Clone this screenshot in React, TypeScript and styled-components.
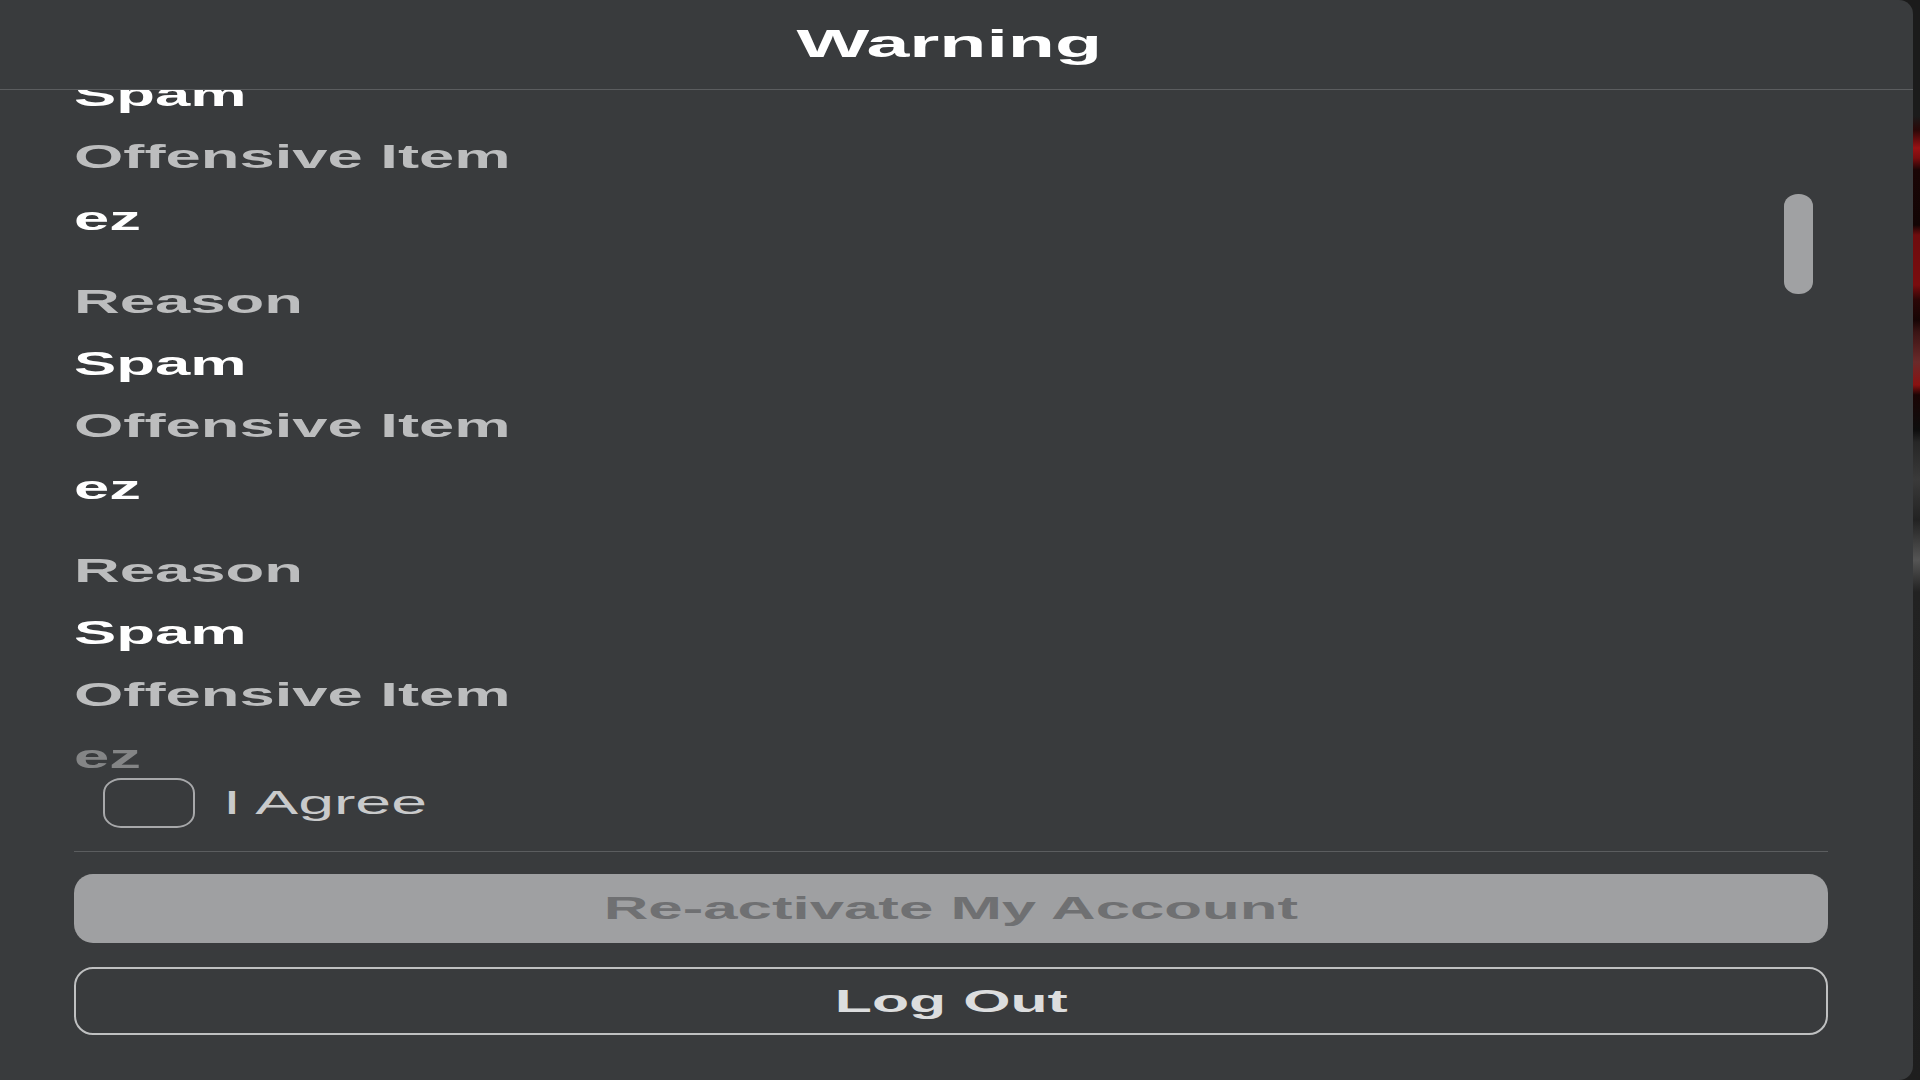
import React, { useLayoutEffect, useRef } from "react";
import styled, { createGlobalStyle } from "styled-components";

const GlobalStyle = createGlobalStyle`
  html, body {
    margin: 0;
    padding: 0;
    height: 100%;
    overflow: hidden;
  }
  body {
    font-family: "Liberation Sans", Arial, sans-serif;
    background: linear-gradient(
      to bottom,
      #1b1b1b 0px,
      #1b1b1b 116px,
      #2a0707 130px,
      #9a1114 148px,
      #7a0d0f 158px,
      #1a0505 170px,
      #120404 225px,
      #6e0c0e 235px,
      #7a0c0e 285px,
      #2b0606 300px,
      #160404 320px,
      #3a1414 332px,
      #6a2a2a 362px,
      #8a1111 385px,
      #1a0404 395px,
      #0d0d0d 430px,
      #262626 442px,
      #3a3a3a 480px,
      #222222 520px,
      #555555 560px,
      #222222 592px,
      #1e1e1e 1080px
    );
  }
  #root {
    height: 100%;
  }
`;

const Screen = styled.main`
  height: 1080px;
  display: flex;
`;

const Panel = styled.section`
  width: 1913px;
  height: 100%;
  flex: none;
  background: #393b3d;
  border-radius: 0 14px 14px 0;
  display: flex;
  flex-direction: column;
  overflow: hidden;
`;

const Header = styled.header`
  height: 89px;
  flex: none;
  border-bottom: 1px solid #5b5d5f;
  display: flex;
  align-items: center;
  justify-content: center;
  padding-right: 14px;
`;

const Title = styled.h1`
  margin: 0;
  display: inline-block;
  font-size: 38px;
  line-height: 89px;
  font-weight: 700;
  color: #ffffff;
  transform: scaleX(2.03);
  transform-origin: center;
`;

const ScrollFrame = styled.div`
  position: relative;
  flex: 1;
  min-height: 0;
`;

const ScrollArea = styled.div`
  height: 100%;
  overflow-y: auto;
  padding-left: 74px;
  box-sizing: border-box;
  scrollbar-width: none;
  -webkit-mask-image: linear-gradient(
    to bottom,
    #000 calc(100% - 36px),
    rgba(0, 0, 0, 0.38) calc(100% - 26px)
  );
  mask-image: linear-gradient(
    to bottom,
    #000 calc(100% - 36px),
    rgba(0, 0, 0, 0.38) calc(100% - 26px)
  );
  &::-webkit-scrollbar {
    display: none;
  }
`;

const ScrollThumb = styled.div`
  position: absolute;
  top: 104px;
  right: 100px;
  width: 29px;
  height: 100px;
  border-radius: 14px / 12px;
  background: #a0a1a3;
`;

const Group = styled.div`
  margin-bottom: 21px;
`;

const Row = styled.div<{ $tone: "label" | "value" }>`
  height: 62px;
  line-height: 62px;
  font-size: 33px;
  font-weight: 700;
  color: ${(p) => (p.$tone === "label" ? "#bcbdbe" : "#ffffff")};
  white-space: nowrap;
`;

const Wide = styled.span<{ $scale: number; $origin?: string }>`
  display: inline-block;
  transform: scaleX(${(p) => p.$scale});
  transform-origin: ${(p) => p.$origin ?? "left center"};
`;

const Footer = styled.footer`
  flex: none;
  display: flex;
  flex-direction: column;
  padding: 6px 85px 45px 74px;
`;

const AgreeRow = styled.label`
  display: flex;
  align-items: center;
  gap: 28px;
  height: 50px;
  padding-left: 29px;
`;

const CheckBox = styled.span`
  width: 92px;
  height: 50px;
  flex: none;
  box-sizing: border-box;
  border: 2px solid #a7a8aa;
  border-radius: 18px / 15px;
`;

const AgreeText = styled.span`
  font-size: 33px;
  font-weight: 400;
  color: #c9cacb;
  white-space: nowrap;
`;

const Divider = styled.hr`
  margin: 23px 0 0;
  height: 1px;
  border: none;
  background: #5b5d5f;
`;

const Buttons = styled.div`
  margin-top: 22px;
  display: flex;
  flex-direction: column;
  gap: 24px;
`;

const BaseButton = styled.button`
  display: flex;
  align-items: center;
  justify-content: center;
  width: 100%;
  box-sizing: border-box;
  border-radius: 19px;
  font-family: "Liberation Sans", Arial, sans-serif;
  font-size: 32px;
  font-weight: 700;
  padding: 0;
  cursor: pointer;
`;

const PrimaryButton = styled(BaseButton)`
  height: 69px;
  border: none;
  background: #9fa0a2;
  color: #6f7072;
`;

const OutlineButton = styled(BaseButton)`
  height: 68px;
  border: 2px solid #bfc0c1;
  background: transparent;
  color: #dcddde;
`;

const ROW_SCALE = 1.92;

const warnings = Array.from({ length: 3 }, (_, i) => ({
  id: i,
  reason: "Spam",
  item: "ez",
}));

export default function App() {
  const scrollRef = useRef<HTMLDivElement>(null);

  useLayoutEffect(() => {
    if (scrollRef.current) scrollRef.current.scrollTop = 88;
  }, []);

  return (
    <>
      <GlobalStyle />
      <Screen>
        <Panel>
          <Header>
            <Title>Warning</Title>
          </Header>
          <ScrollFrame>
            <ScrollArea ref={scrollRef}>
              {warnings.map((w) => (
                <Group key={w.id}>
                  <Row $tone="label">
                    <Wide $scale={ROW_SCALE}>Reason</Wide>
                  </Row>
                  <Row $tone="value">
                    <Wide $scale={ROW_SCALE}>{w.reason}</Wide>
                  </Row>
                  <Row $tone="label">
                    <Wide $scale={ROW_SCALE}>Offensive Item</Wide>
                  </Row>
                  <Row $tone="value">
                    <Wide $scale={ROW_SCALE}>{w.item}</Wide>
                  </Row>
                </Group>
              ))}
            </ScrollArea>
            <ScrollThumb />
          </ScrollFrame>
          <Footer>
            <AgreeRow>
              <CheckBox role="checkbox" aria-checked="false" />
              <AgreeText>
                <Wide $scale={1.95}>I Agree</Wide>
              </AgreeText>
            </AgreeRow>
            <Divider />
            <Buttons>
              <PrimaryButton disabled>
                <Wide $scale={1.93} $origin="center">
                  Re-activate My Account
                </Wide>
              </PrimaryButton>
              <OutlineButton>
                <Wide $scale={1.9} $origin="center">
                  Log Out
                </Wide>
              </OutlineButton>
            </Buttons>
          </Footer>
        </Panel>
      </Screen>
    </>
  );
}
